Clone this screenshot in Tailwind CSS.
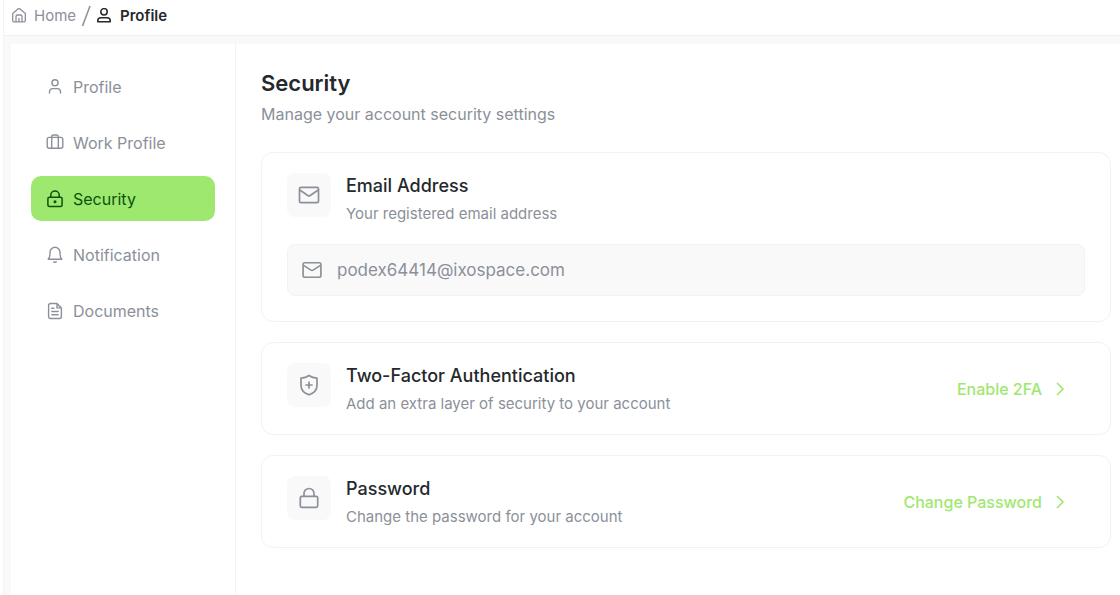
<!DOCTYPE html>
<html lang="en">
  <head>
    <meta charset="UTF-8" />
    <meta name="viewport" content="width=device-width, initial-scale=1.0" />
    <title>Security</title>
    <script src="https://cdn.jsdelivr.net/npm/@tailwindcss/browser@4"></script>
  </head>
  <body class="bg-white font-['Inter','Open_Sans',sans-serif] text-[#8b9099]">
    <div class="flex flex-col min-h-screen ml-[3px] border-l border-[#f3f3f3] bg-[#f9f9f9]">
      <!-- Breadcrumb -->
      <header class="h-9 shrink-0 bg-white border-b border-[#f0f0f0]">
        <nav class="flex items-center h-8 pl-[7px] text-[15px]" aria-label="Breadcrumb">
          <a href="#" class="flex items-center gap-[7px]">
            <svg class="size-4" viewBox="0 0 16 16" fill="none" stroke="currentColor" stroke-width="1.300" stroke-linejoin="round">
              <path d="M1.700 5.400 6.900 1.100a1.700 1.700 0 0 1 2.200 0l5.200 4.300v7a1.500 1.500 0 0 1-1.500 1.500H3.200a1.500 1.500 0 0 1-1.500-1.500Z" />
              <path d="M5 13.800V8.500a1.500 1.500 0 0 1 1.500-1.500h3A1.500 1.500 0 0 1 11 8.500v5.300M8 10v3.800" />
            </svg>
            Home
          </a>
          <svg class="w-3 h-6 mx-1" viewBox="0 0 12 24" fill="none" stroke="currentColor" stroke-width="1.600">
            <path d="M10 2 2.500 22" />
          </svg>
          <a href="#" class="flex items-center gap-2 font-semibold text-[#25282c]" aria-current="page">
            <svg class="size-4" viewBox="0 0 16 16" fill="none" stroke="currentColor" stroke-width="1.500" stroke-linejoin="round">
              <circle cx="8" cy="3.800" r="3.200" />
              <path d="M1.700 13.800v-.9a3.300 3.300 0 0 1 3.300-3.200h6a3.300 3.300 0 0 1 3.300 3.200v.9Z" />
            </svg>
            Profile
          </a>
        </nav>
      </header>

      <div class="flex flex-1 mt-2 ml-[7px] bg-white">
        <!-- Sidebar -->
        <aside class="w-[225px] shrink-0 px-5 py-5 border-r border-[#f3f3f3]">
          <nav class="flex flex-col gap-[11px] text-base">
            <a href="#" class="flex items-center h-[45px] gap-2 pl-[14px] rounded-[10px]">
              <svg class="size-5" viewBox="0 0 20 20" fill="none" stroke="currentColor" stroke-width="1.400" stroke-linecap="round">
                <circle cx="10" cy="5.800" r="3.100" />
                <path d="M4.500 16v-1.200a3.300 3.300 0 0 1 3.300-3.200h4.400a3.300 3.300 0 0 1 3.300 3.200V16" />
              </svg>
              Profile
            </a>
            <a href="#" class="flex items-center h-[45px] gap-2 pl-[14px] rounded-[10px]">
              <svg class="size-5" viewBox="0 0 20 20" fill="none" stroke="currentColor" stroke-width="1.400">
                <rect x="2.200" y="4.400" width="15.600" height="10.800" rx="2" />
                <path d="M6.700 15.200V3.600a1.600 1.600 0 0 1 1.600-1.600h3.400a1.600 1.600 0 0 1 1.600 1.600v11.600" />
              </svg>
              Work Profile
            </a>
            <a href="#" class="flex items-center h-[45px] gap-2 pl-[14px] rounded-[10px] bg-[#9fe870] text-[#075407]" aria-current="page">
              <svg class="size-5" viewBox="0 0 20 20" fill="none" stroke="currentColor" stroke-width="1.500">
                <rect x="2.900" y="8.200" width="14.200" height="9.300" rx="1.500" />
                <path d="M5.800 8.200V6.200a4.200 4.200 0 0 1 8.400 0v2" />
                <circle cx="10" cy="12.800" r=".8" fill="currentColor" />
              </svg>
              Security
            </a>
            <a href="#" class="flex items-center h-[45px] gap-2 pl-[14px] rounded-[10px]">
              <svg class="size-5" viewBox="0 0 20 20" fill="none" stroke="currentColor" stroke-width="1.400" stroke-linecap="round" stroke-linejoin="round">
                <path d="M3.200 14.300c1-1 1.600-2.600 1.700-4.600l.1-2.400a5 5 0 0 1 10 0l.1 2.400c.1 2 .7 3.600 1.700 4.600Z" />
                <path d="M8.800 16.800q1.200.8 2.400 0" />
              </svg>
              Notification
            </a>
            <a href="#" class="flex items-center h-[45px] gap-2 pl-[14px] rounded-[10px]">
              <svg class="size-5" viewBox="0 0 20 20" fill="none" stroke="currentColor" stroke-width="1.400" stroke-linecap="round" stroke-linejoin="round">
                <path d="M12 2.500H5.500A1.900 1.900 0 0 0 3.600 4.400v11.200a1.900 1.900 0 0 0 1.900 1.900h9a1.900 1.900 0 0 0 1.900-1.900V6.900L12 2.500v4.400h4.400" />
                <path d="M6.800 7.300h2M6.800 10.500h6.400M6.800 13.700h6.400" />
              </svg>
              Documents
            </a>
          </nav>
        </aside>

        <!-- Security settings -->
        <main class="flex-1 pt-6 pb-10 pl-[25px] pr-[9px]">
          <h1 class="text-[22px] leading-[30px] font-semibold text-[#25282c]">Security</h1>
          <p class="text-base leading-8">Manage your account security settings</p>

          <div class="flex flex-col gap-5 mt-[22px]">
            <!-- Email -->
            <section class="px-[25px] pt-[18px] pb-[25px] border border-[#f2f2f2] rounded-xl">
              <div class="flex gap-[15px]">
                <div class="flex items-center justify-center mt-0.5 size-11 shrink-0 rounded-lg bg-[#f9f9f9]">
                  <svg class="size-6" viewBox="0 0 24 24" fill="none" stroke="currentColor" stroke-width="1.700" stroke-linejoin="round">
                    <rect x="2.500" y="4.300" width="19" height="15.400" rx="1.500" />
                    <path d="m2.800 7 8 5.500a2.200 2.200 0 0 0 2.400 0l8-5.500" />
                  </svg>
                </div>
                <div>
                  <h2 class="text-lg leading-[30px] font-medium text-[#25282c]">
                    <label for="email">Email Address</label>
                  </h2>
                  <p class="text-[15px] leading-[25px]">Your registered email address</p>
                </div>
              </div>
              <div class="flex items-center h-[52px] gap-[15px] mt-[18px] px-[14px] border border-[#f2f2f2] rounded-lg bg-[#f9f9f9]">
                <svg class="size-5 shrink-0" viewBox="0 0 24 24" fill="none" stroke="currentColor" stroke-width="2" stroke-linejoin="round">
                  <rect x="1.300" y="3.300" width="21.400" height="17.400" rx="2" />
                  <path d="m1.800 6.500 9 5.700a2.200 2.200 0 0 0 2.400 0l9-5.700" />
                </svg>
                <input id="email" type="email" value="podex64414@ixospace.com" readonly class="flex-1 min-w-0 pt-0.5 text-[17px] bg-transparent outline-none" />
              </div>
            </section>

            <!-- Two-factor -->
            <section class="flex items-center justify-between pl-[25px] pr-10 py-[18px] border border-[#f2f2f2] rounded-xl">
              <div class="flex gap-[15px]">
                <div class="flex items-center justify-center mt-0.5 size-11 shrink-0 rounded-lg bg-[#f9f9f9]">
                  <svg class="size-6" viewBox="0 0 24 24" fill="none" stroke="currentColor" stroke-width="1.700" stroke-linecap="round" stroke-linejoin="round">
                    <path d="M12 2.500c2.300 1.700 4.900 2.500 8 2.700v7c0 5.100-3.400 8-8 9.600-4.600-1.600-8-4.500-8-9.600v-7c3.100-.2 5.700-1 8-2.700Z" />
                    <path d="M12 9v6M9 12h6" />
                  </svg>
                </div>
                <div>
                  <h2 class="text-lg leading-[30px] font-medium text-[#25282c]">Two-Factor Authentication</h2>
                  <p class="text-[15px] leading-[25px]">Add an extra layer of security to your account</p>
                </div>
              </div>
              <button type="button" class="flex items-center gap-2 text-base font-medium text-[#9fe870]">
                Enable 2FA
                <svg class="size-5" viewBox="0 0 20 20" fill="none" stroke="currentColor" stroke-width="1.600">
                  <path d="m7 4 6 6-6 6" />
                </svg>
              </button>
            </section>

            <!-- Password -->
            <section class="flex items-center justify-between pl-[25px] pr-10 py-[18px] border border-[#f2f2f2] rounded-xl">
              <div class="flex gap-[15px]">
                <div class="flex items-center justify-center mt-0.5 size-11 shrink-0 rounded-lg bg-[#f9f9f9]">
                  <svg class="size-6" viewBox="0 0 24 24" fill="none" stroke="currentColor" stroke-width="1.700">
                    <rect x="3.300" y="10.300" width="17.400" height="11" rx="1.500" />
                    <path d="M7 10.300V7.500a5 5 0 0 1 10 0v2.800" />
                  </svg>
                </div>
                <div>
                  <h2 class="text-lg leading-[30px] font-medium text-[#25282c]">Password</h2>
                  <p class="text-[15px] leading-[25px]">Change the password for your account</p>
                </div>
              </div>
              <button type="button" class="flex items-center gap-2 text-base font-medium text-[#9fe870]">
                Change Password
                <svg class="size-5" viewBox="0 0 20 20" fill="none" stroke="currentColor" stroke-width="1.600">
                  <path d="m7 4 6 6-6 6" />
                </svg>
              </button>
            </section>
          </div>
        </main>
      </div>
    </div>
  </body>
</html>
